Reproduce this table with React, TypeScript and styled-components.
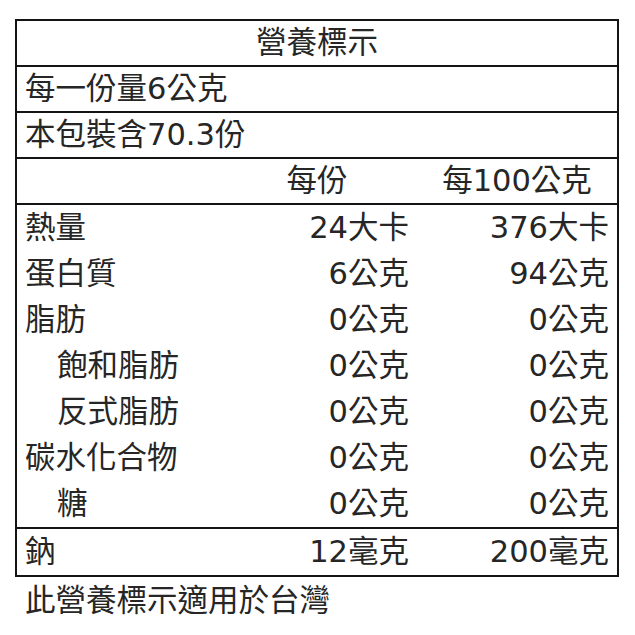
import React from "react";
import styled, { createGlobalStyle } from "styled-components";

const GlobalStyle = createGlobalStyle`
  html, body { margin: 0; padding: 0; background: #fff; }
  body {
    font-family: "DejaVu Sans", "Noto Sans CJK TC", sans-serif;
    color: #262626;
  }
`;

interface Nutrient {
  name: string;
  perServing: string;
  per100: string;
  indent?: boolean;
}

const nutrients: Nutrient[] = [
  { name: "熱量", perServing: "24大卡", per100: "376大卡" },
  { name: "蛋白質", perServing: "6公克", per100: "94公克" },
  { name: "脂肪", perServing: "0公克", per100: "0公克" },
  { name: "飽和脂肪", perServing: "0公克", per100: "0公克", indent: true },
  { name: "反式脂肪", perServing: "0公克", per100: "0公克", indent: true },
  { name: "碳水化合物", perServing: "0公克", per100: "0公克" },
  { name: "糖", perServing: "0公克", per100: "0公克", indent: true },
];

export default function App() {
  return (
    <>
      <GlobalStyle />
      <Page>
        <Label>
          <TitleRow>營養標示</TitleRow>
          <InfoRow>每一份量6公克</InfoRow>
          <InfoRow>本包裝含70.3份</InfoRow>
          <Grid $ruled>
            <span />
            <HeadCell>每份</HeadCell>
            <HeadCell>每100公克</HeadCell>
          </Grid>
          <Section>
            {nutrients.map((n) => (
              <Grid key={n.name}>
                <NameCell $indent={n.indent}>{n.name}</NameCell>
                <ValueCell>{n.perServing}</ValueCell>
                <ValueCell>{n.per100}</ValueCell>
              </Grid>
            ))}
          </Section>
          <Grid>
            <NameCell>鈉</NameCell>
            <ValueCell>12毫克</ValueCell>
            <ValueCell>200毫克</ValueCell>
          </Grid>
        </Label>
        <Note>此營養標示適用於台灣</Note>
      </Page>
    </>
  );
}

// ===================== styled ===================== //
const Page = styled.main`
  padding: 19px 0 0 15px;
  font-size: 30.5px;
`;

const Label = styled.section`
  box-sizing: border-box;
  width: 604px;
  border: 2px solid #141414;
`;

const TitleRow = styled.div`
  height: 44px;
  line-height: 44px;
  text-align: center;
  border-bottom: 2px solid #141414;
`;

const InfoRow = styled.div`
  height: 44px;
  line-height: 44px;
  padding-left: 8px;
  border-bottom: 2px solid #141414;
`;

const Grid = styled.div<{ $ruled?: boolean }>`
  display: grid;
  grid-template-columns: 200px 200px 200px;
  height: ${({ $ruled }) => ($ruled ? "44px" : "46px")};
  line-height: ${({ $ruled }) => ($ruled ? "44px" : "46px")};
  border-bottom: ${({ $ruled }) => ($ruled ? "2px solid #141414" : "none")};
`;

const Section = styled.div`
  border-bottom: 2px solid #141414;
`;

const HeadCell = styled.span`
  text-align: center;
  white-space: nowrap;
`;

const NameCell = styled.span<{ $indent?: boolean }>`
  padding-left: ${({ $indent }) => ($indent ? "40px" : "8px")};
  white-space: nowrap;
`;

const ValueCell = styled.span`
  text-align: right;
  padding-right: 8px;
  white-space: nowrap;
`;

const Note = styled.p`
  margin: 0;
  padding-left: 10px;
  height: 48px;
  line-height: 48px;
`;
